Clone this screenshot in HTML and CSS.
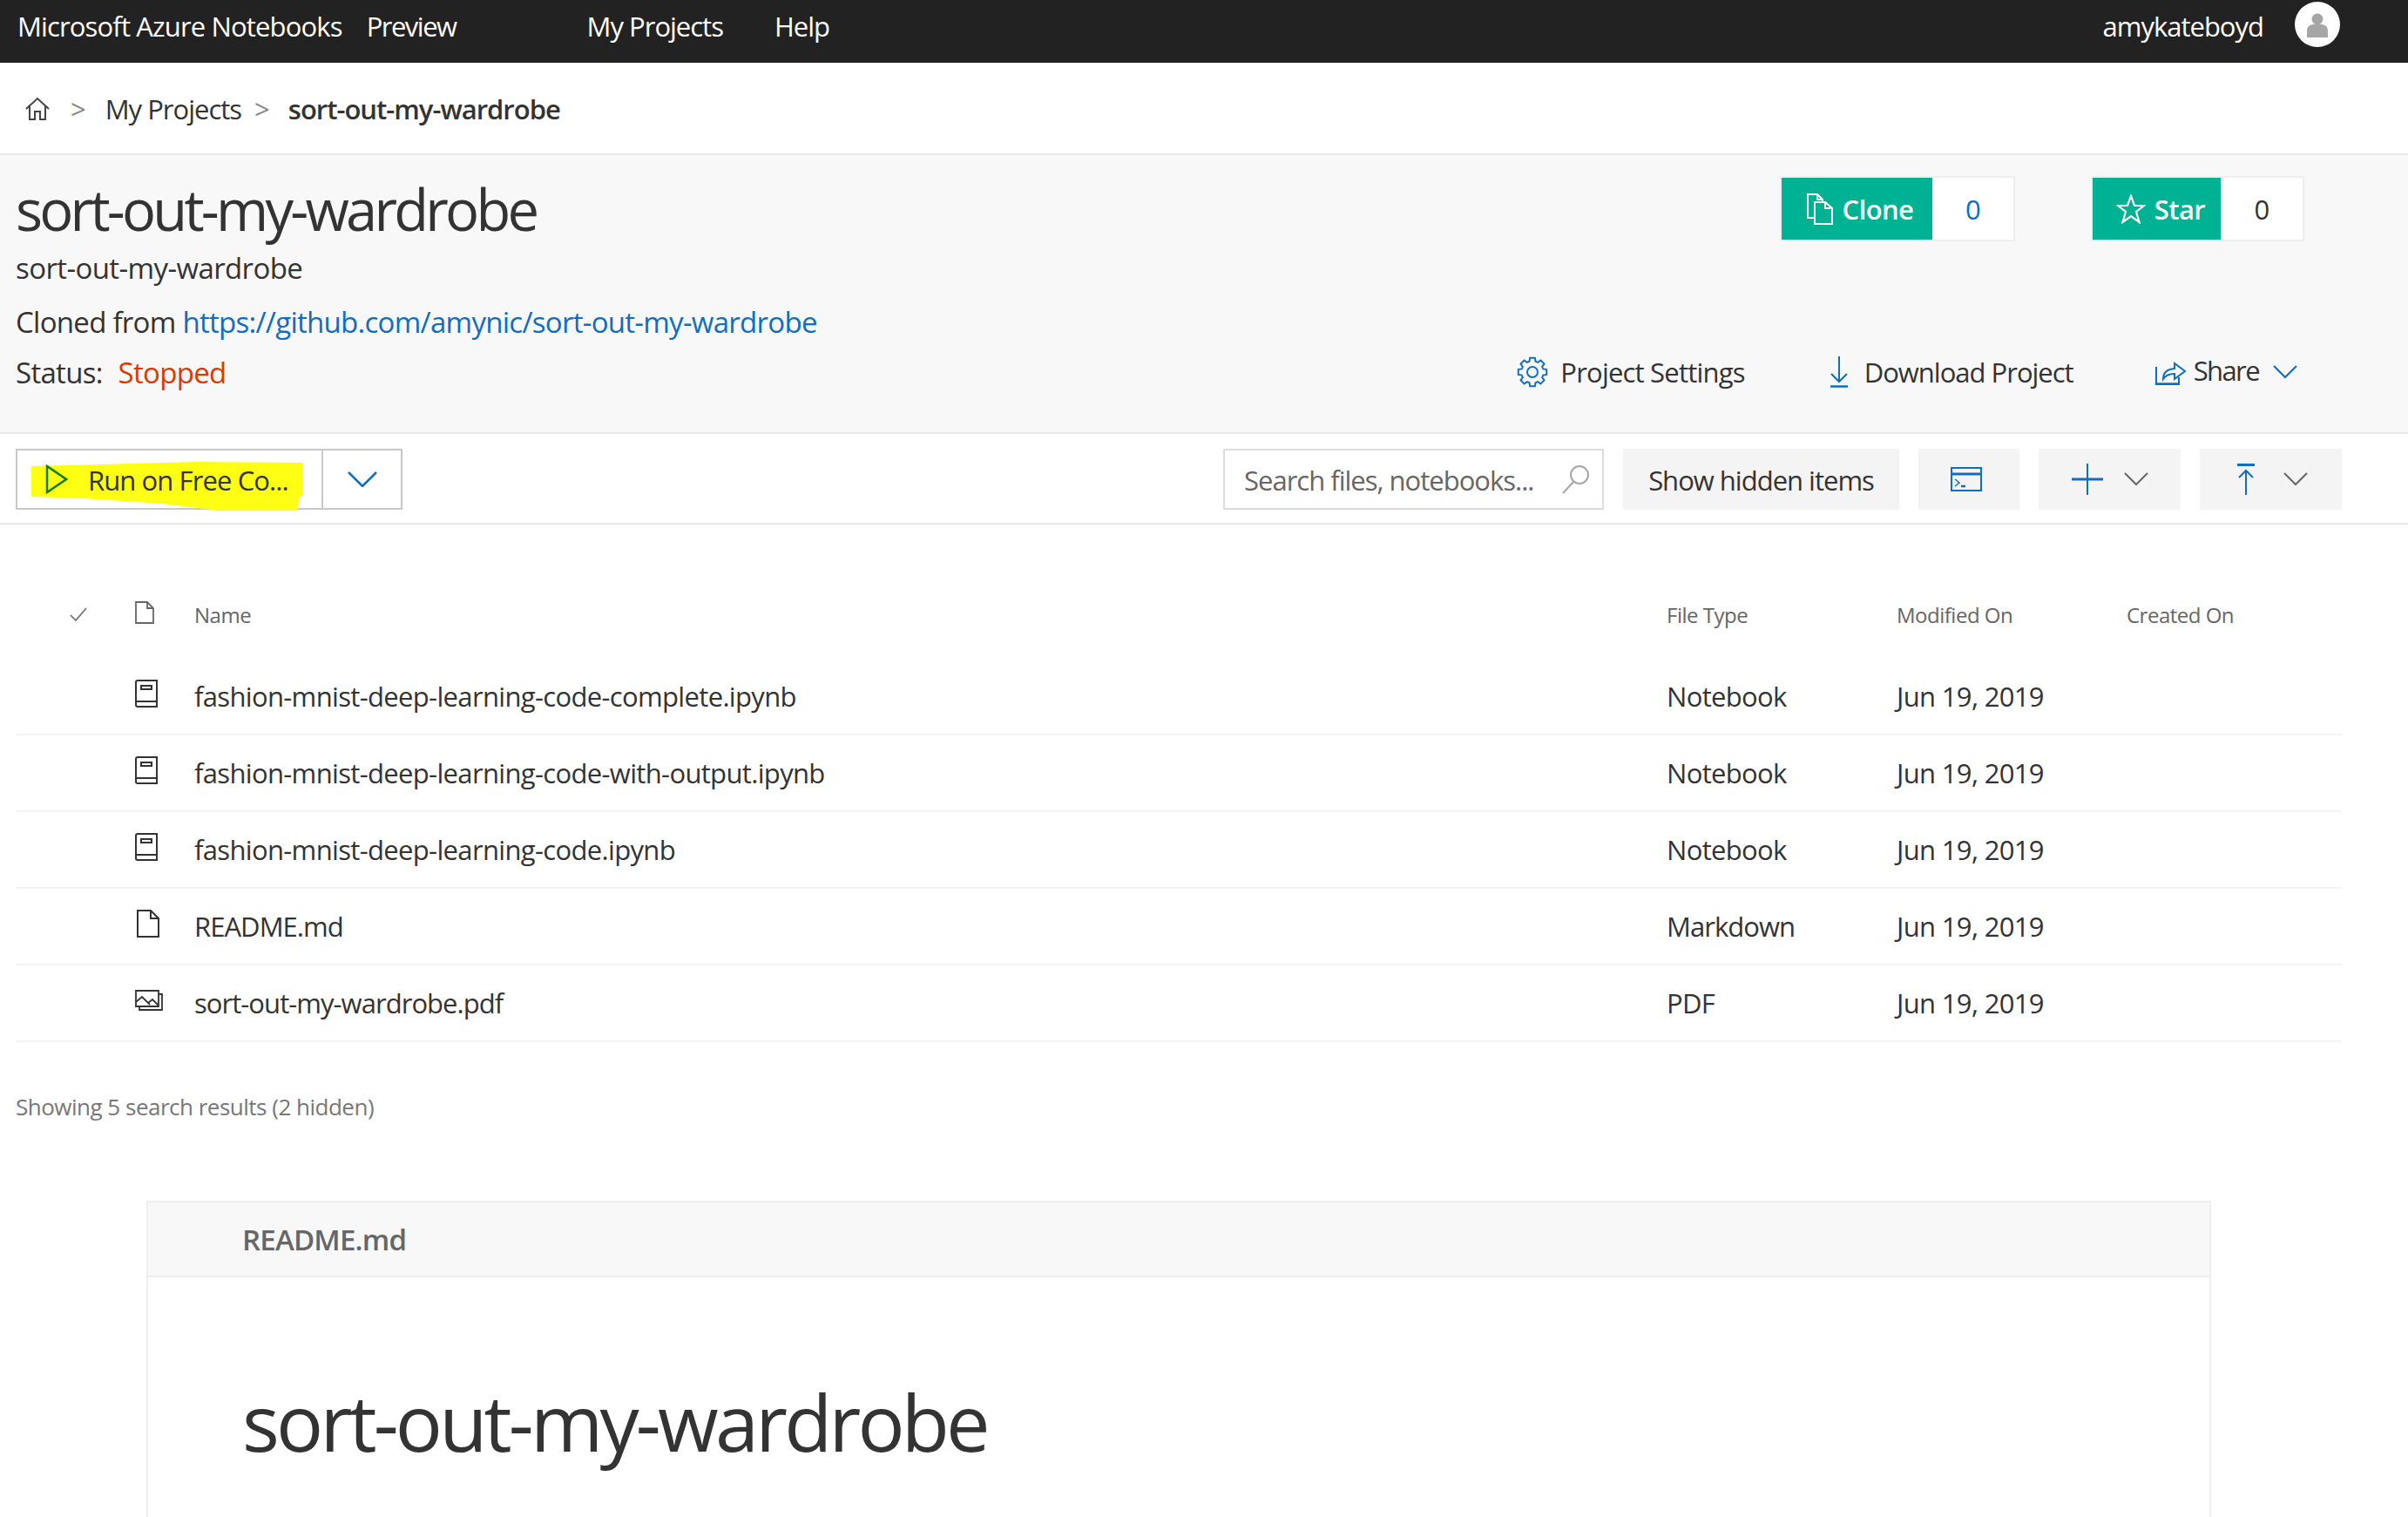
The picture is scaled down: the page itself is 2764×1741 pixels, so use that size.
FILE: index.html
```html
<!DOCTYPE html>
<html lang="en">
<head>
    <meta charset="UTF-8">
    <title>sort-out-my-wardrobe - Microsoft Azure Notebooks</title>
    <link rel="stylesheet" href="styles.css">
</head>
<body>

<nav class="topbar">
    <a class="brand">Microsoft Azure Notebooks</a>
    <a class="preview">Preview</a>
    <a class="nav-projects">My Projects</a>
    <a class="nav-help">Help</a>
    <span class="user">amykateboyd</span>
    <span class="avatar">
        <svg width="26" height="30" viewBox="0 0 26 30"><circle cx="13" cy="8" r="6.5" fill="#a6a6a6"/><path d="M1 29v-8q0-6 7-7h10q7 1 7 7v8z" fill="#a6a6a6"/></svg>
    </span>
</nav>

<div class="breadcrumb">
    <svg class="home" width="28" height="28" viewBox="0 0 28 28" fill="none" stroke="#444" stroke-width="2"><path d="M1 14 14 2l13 12M5 11v15h6v-9h6v9h6V11"/></svg>
    <span class="sep">&gt;</span>
    <a class="crumb">My Projects</a>
    <span class="sep sep2">&gt;</span>
    <strong class="crumb-current">sort-out-my-wardrobe</strong>
</div>

<header class="project">
    <div class="project-info">
        <h1 class="project-title">sort-out-my-wardrobe</h1>
        <div class="project-desc">sort-out-my-wardrobe</div>
        <div class="project-clone">Cloned from <a class="link">https://github.com/amynic/sort-out-my-wardrobe</a></div>
        <div class="project-status">Status: <span class="stopped">Stopped</span></div>
    </div>
    <div class="project-side">
        <div class="counters">
            <div class="counter">
                <span class="counter-btn clone-btn">
                    <svg width="32" height="36" viewBox="0 0 32 36" fill="none" stroke="#fff" stroke-width="2"><path d="M10 28H2V1h11l6 6v3"/><path d="M13 1v6h6M10 10h12l8 7v18H10zM22 10v7h8"/></svg>
                    Clone
                </span>
                <span class="counter-num clone-num">0</span>
            </div>
            <div class="counter star">
                <span class="counter-btn star-btn">
                    <svg width="34" height="34" viewBox="0 0 34 34" fill="none" stroke="#fff" stroke-width="2.2"><path d="M17 2l4 11h11l-9 7 3.500 12L17 25 7.500 32 11 20l-9-7h11z"/></svg>
                    Star
                </span>
                <span class="counter-num star-num">0</span>
            </div>
        </div>
        <div class="actions">
            <a class="action settings">
                <svg width="36" height="36" viewBox="0 0 24 24" fill="none" stroke="#106ebe" stroke-width="1.300"><polygon points="9.66,3.83 10.09,1.17 13.91,1.17 14.34,3.83 16.12,4.57 18.31,2.99 21.01,5.69 19.43,7.88 20.17,9.66 22.83,10.09 22.83,13.91 20.17,14.34 19.43,16.12 21.01,18.31 18.31,21.01 16.12,19.43 14.34,20.17 13.91,22.83 10.09,22.83 9.66,20.17 7.88,19.43 5.69,21.01 2.99,18.31 4.57,16.12 3.83,14.34 1.17,13.91 1.17,10.09 3.83,9.66 4.57,7.88 2.99,5.69 5.69,2.99 7.88,4.57"/><circle cx="12" cy="12" r="4"/></svg>
                Project Settings
            </a>
            <a class="action download">
                <svg width="22" height="36" viewBox="0 0 22 36" fill="none" stroke="#106ebe" stroke-width="2"><path d="M11 0v28M2 20l9 9 9-9"/><path d="M1 34.500h20" stroke-width="2.500"/></svg>
                Download Project
            </a>
            <a class="action share">
                <svg width="36" height="30" viewBox="0 0 36 30" fill="none" stroke="#106ebe" stroke-width="2"><path d="M1 9v20h26v-8" /><path d="M1 28.500h26" stroke-width="2.500"/><path d="M9 23q0-11 13-12V5l12 9-12 9v-6q-9 0-13 6z"/></svg>
                <span class="share-text">Share</span>
                <svg class="chev" width="28" height="16" viewBox="0 0 28 16" fill="none" stroke="#106ebe" stroke-width="2.200"><path d="M1 1l13 13L27 1"/></svg>
            </a>
        </div>
    </div>
</header>

<div class="toolbar">
    <div class="run">
        <!-- marker scribble on top of the button -->
        <svg class="marker" width="312" height="56" viewBox="0 0 312 56"><path d="M0 5 80 3 190 0 311 1 312 38 307 41 306 56 215 56 150 48 60 42 0 40z" fill="#ffff14"/></svg>
        <span class="run-main">
            <svg class="play" width="26" height="34" viewBox="0 0 26 34" fill="none" stroke="#107c10" stroke-width="2.500"><path d="M2 2v30l22-15z"/></svg>
            <span class="run-text">Run on Free Co...</span>
        </span>
        <span class="run-drop">
            <svg width="34" height="18" viewBox="0 0 34 18" fill="none" stroke="#106ebe" stroke-width="2.500"><path d="M1 1l16 16L33 1"/></svg>
        </span>
    </div>
    <div class="tools">
        <div class="search">
            <span class="search-text">Search files, notebooks...</span>
            <svg width="32" height="34" viewBox="0 0 32 34" fill="none" stroke="#a6a6a6" stroke-width="2"><circle cx="20" cy="12" r="10"/><path d="M13 20 1 33"/></svg>
        </div>
        <button class="tool hidden-btn">Show hidden items</button>
        <button class="tool term-btn">
            <svg width="36" height="28" viewBox="0 0 36 28" fill="none" stroke="#106ebe" stroke-width="2"><rect x="1" y="1" width="34" height="26"/><path d="M1 8h34" stroke-width="3"/><path d="M5 14l5 4-5 4" stroke-width="1.500"/><path d="M12 22h5" stroke-width="2.500"/></svg>
        </button>
        <button class="tool add-btn">
            <svg width="36" height="36" viewBox="0 0 36 36" fill="none" stroke="#106ebe" stroke-width="2"><path d="M18 0v36"/><path d="M0 18h36" stroke-width="3"/></svg>
            <svg class="tool-chev" width="28" height="16" viewBox="0 0 28 16" fill="none" stroke="#666" stroke-width="2"><path d="M1 1l13 13L27 1"/></svg>
        </button>
        <button class="tool upload-btn">
            <svg width="22" height="36" viewBox="0 0 22 36" fill="none" stroke="#106ebe" stroke-width="2"><path d="M1 1.500h20" stroke-width="3"/><path d="M11 36V8M3 16l8-8 8 8"/></svg>
            <svg class="tool-chev" width="28" height="16" viewBox="0 0 28 16" fill="none" stroke="#666" stroke-width="2"><path d="M1 1l13 13L27 1"/></svg>
        </button>
    </div>
</div>

<main class="files">
    <div class="file-row file-head">
        <span class="cell-check"><svg width="20" height="16" viewBox="0 0 20 16" fill="none" stroke="#666" stroke-width="1.500"><path d="M1 9l6 6L19 1"/></svg></span>
        <span class="cell-icon">
            <svg width="22" height="26" viewBox="0 0 22 26" fill="none" stroke="#666" stroke-width="1.800"><path d="M1 1h13l7 7v17H1zM14 1v7h7"/></svg>
        </span>
        <span>Name</span>
        <span>File Type</span>
        <span>Modified On</span>
        <span>Created On</span>
    </div>
    <div class="file-row">
        <span class="cell-check"></span>
        <span class="cell-icon"><svg width="26" height="32" viewBox="0 0 26 32" fill="none" stroke="#333" stroke-width="2"><path d="M1 27V3q0-2 2-2h22v30H3q-2 0-2-2zM1 25h24"/><rect x="7" y="7" width="12" height="4"/></svg></span>
        <span>fashion-mnist-deep-learning-code-complete.ipynb</span>
        <span>Notebook</span>
        <span>Jun 19, 2019</span>
        <span></span>
    </div>
    <div class="file-row">
        <span class="cell-check"></span>
        <span class="cell-icon"><svg width="26" height="32" viewBox="0 0 26 32" fill="none" stroke="#333" stroke-width="2"><path d="M1 27V3q0-2 2-2h22v30H3q-2 0-2-2zM1 25h24"/><rect x="7" y="7" width="12" height="4"/></svg></span>
        <span>fashion-mnist-deep-learning-code-with-output.ipynb</span>
        <span>Notebook</span>
        <span>Jun 19, 2019</span>
        <span></span>
    </div>
    <div class="file-row">
        <span class="cell-check"></span>
        <span class="cell-icon"><svg width="26" height="32" viewBox="0 0 26 32" fill="none" stroke="#333" stroke-width="2"><path d="M1 27V3q0-2 2-2h22v30H3q-2 0-2-2zM1 25h24"/><rect x="7" y="7" width="12" height="4"/></svg></span>
        <span>fashion-mnist-deep-learning-code.ipynb</span>
        <span>Notebook</span>
        <span>Jun 19, 2019</span>
        <span></span>
    </div>
    <div class="file-row">
        <span class="cell-check"></span>
        <span class="cell-icon"><svg class="doc-icon" width="26" height="32" viewBox="0 0 26 32" fill="none" stroke="#333" stroke-width="2"><path d="M1 1h15l9 9v21H1zM16 1v9h9"/></svg></span>
        <span class="tight">README.md</span>
        <span class="tight">Markdown</span>
        <span>Jun 19, 2019</span>
        <span></span>
    </div>
    <div class="file-row">
        <span class="cell-check"></span>
        <span class="cell-icon"><svg width="32" height="24" viewBox="0 0 32 24" fill="none" stroke="#333" stroke-width="1.800"><path d="M1 1h26v18H1z"/><path d="M27 5h4v18H5v-4"/><path d="M1 14l7-6 9 9M15 15l5-4 7 7"/></svg></span>
        <span class="tight">sort-out-my-wardrobe.pdf</span>
        <span>PDF</span>
        <span>Jun 19, 2019</span>
        <span></span>
    </div>
    <div class="results">Showing 5 search results (2 hidden)</div>
</main>

<section class="readme">
    <div class="readme-head">README.md</div>
    <div class="readme-body">
        <h1 class="readme-title">sort-out-my-wardrobe</h1>
    </div>
</section>

</body>
</html>
```

FILE: styles.css
```css
html, body {
    margin: 0;
    padding: 0;
}
body {
    height: 1741px;
    overflow: hidden;
    background-color: #fff;
    color: #333;
    font-family: "Open Sans", "Noto Sans", sans-serif;
    font-size: 31px;
    letter-spacing: -0.7px;
}
svg {
    flex-shrink: 0;
    display: block;
}

/* top bar */
.topbar {
    height: 72px;
    box-sizing: border-box;
    background-color: #222;
    color: #fff;
    display: flex;
    align-items: center;
    padding: 0 78px 12px 20px;
    letter-spacing: -1px;
}
.brand {
    letter-spacing: -0.85px;
}
.preview {
    margin-left: 28px;
    letter-spacing: -1.5px;
}
.nav-projects {
    margin-left: 150px;
}
.nav-help {
    margin-left: 59px;
}
.user {
    margin-left: auto;
}
.avatar {
    width: 52px;
    height: 52px;
    margin-left: 36px;
    border-radius: 50%;
    background-color: #fff;
    display: flex;
    align-items: flex-end;
    justify-content: center;
    padding-bottom: 0;
    overflow: hidden;
    align-self: flex-start;
    margin-top: 2px;
}
.avatar svg {
    margin-bottom: 10px;
}

/* breadcrumb */
.breadcrumb {
    height: 106px;
    box-sizing: border-box;
    border-bottom: 2px solid #e8e8e8;
    display: flex;
    align-items: center;
    padding: 2px 0 0 29px;
    letter-spacing: -1px;
}
.sep {
    color: #888;
    margin: 0 23px 0 24px;
}
.sep2 {
    margin: 0 22px 0 15px;
}
.crumb-current {
    font-weight: 600;
}

/* project header */
.project {
    height: 318px;
    box-sizing: border-box;
    background-color: #f8f8f8;
    display: flex;
    justify-content: space-between;
    padding: 0 121px 0 18px;
}
.project-title {
    margin: 20px 0 0;
    font-size: 65px;
    font-weight: 400;
    line-height: 84px;
    letter-spacing: -3.750px;
}
.project-desc {
    margin-top: 4px;
    line-height: 44px;
    font-size: 33px;
    letter-spacing: -0.6px;
}
.project-clone {
    margin-top: 18px;
    line-height: 44px;
    font-size: 33px;
    letter-spacing: -0.72px;
}
.project-status {
    margin-top: 14px;
    line-height: 44px;
    font-size: 33px;
    letter-spacing: -0.7px;
}
.link {
    color: #106ebe;
}
.stopped {
    color: #d83b01;
    margin-left: 10px;
}
.project-side {
    display: flex;
    flex-direction: column;
    align-items: flex-end;
}
.counters {
    display: flex;
    gap: 91px;
    margin-top: 26px;
    letter-spacing: -0.6px;
}
.counter {
    display: flex;
    height: 71px;
    background-color: #fff;
    box-shadow: 0 0 0 2px #eee;
}
.counter-btn {
    background-color: #00b294;
    color: #fff;
    font-weight: 600;
    display: flex;
    align-items: center;
    justify-content: center;
    gap: 10px;
    box-sizing: border-box;
}
.clone-btn {
    width: 173px;
    padding-left: 6px;
}
.star-btn {
    width: 147px;
    padding-left: 9px;
}
.counter-num {
    display: flex;
    align-items: center;
    justify-content: center;
}
.clone-num {
    width: 93px;
    color: #106ebe;
}
.star-num {
    width: 94px;
}
.actions {
    display: flex;
    align-items: center;
    margin-top: 131px;
    padding-right: 6px;
}
.action {
    display: flex;
    align-items: center;
    gap: 14px;
}
.settings {
    letter-spacing: -0.8px;
}
.download {
    margin-left: 97px;
    gap: 18px;
    letter-spacing: -1px;
}
.share {
    margin-left: 94px;
    gap: 8px;
}
.share-text {
    margin-top: -4px;
    letter-spacing: -1.600px;
}
.share .chev {
    margin-left: 8px;
}

/* toolbar */
.toolbar {
    height: 106px;
    box-sizing: border-box;
    border-top: 2px solid #e8e8e8;
    border-bottom: 2px solid #e8e8e8;
    display: flex;
    justify-content: space-between;
    align-items: center;
    padding: 1px 76px 0 18px;
    letter-spacing: -1px;
}
.run {
    position: relative;
    display: flex;
    width: 444px;
    height: 70px;
    box-sizing: border-box;
    border: 2px solid #c8c8c8;
}
.marker {
    position: absolute;
    left: 16px;
    top: 13px;
}
.run-main {
    position: relative;
    width: 351px;
    display: flex;
    align-items: center;
    gap: 23px;
    padding-left: 32px;
    box-sizing: border-box;
    border-right: 2px solid #c8c8c8;
    letter-spacing: -0.9px;
}
.run-text, .search-text {
    margin-top: 2px;
}
.run-drop {
    flex: 1;
    display: flex;
    align-items: center;
    justify-content: center;
}
.tools {
    display: flex;
    gap: 22px;
}
.search {
    width: 437px;
    height: 70px;
    box-sizing: border-box;
    border: 2px solid #ddd;
    display: flex;
    align-items: center;
    justify-content: space-between;
    padding: 0 14px 0 22px;
    color: #666;
}
.tool {
    height: 70px;
    border: none;
    padding: 0;
    background-color: #f4f4f4;
    color: #333;
    font-family: inherit;
    font-size: inherit;
    letter-spacing: inherit;
    display: flex;
    align-items: center;
    justify-content: center;
}
.hidden-btn {
    width: 317px;
    padding-top: 2px;
}
.term-btn {
    width: 116px;
    padding-right: 6px;
}
.add-btn {
    width: 163px;
    gap: 24px;
}
.upload-btn {
    width: 163px;
    gap: 32px;
    padding-left: 2px;
}

/* file list */
.files {
    padding: 0 76px 0 18px;
}
.file-row {
    display: grid;
    grid-template-columns: 137px 68px 1690px 264px 264px 1fr;
    align-items: center;
    height: 88px;
    box-sizing: border-box;
    border-bottom: 2px solid #f4f4f4;
    letter-spacing: -0.66px;
}
.tight {
    letter-spacing: -0.95px;
}
.file-head {
    height: 154px;
    padding-top: 53px;
    border-bottom: none;
    font-size: 24px;
    letter-spacing: -0.5px;
    color: #666;
}
.cell-check {
    padding-left: 62px;
}
.cell-icon {
    margin-bottom: 6px;
}
.file-head .cell-check {
    margin-bottom: 2px;
}
.doc-icon {
    margin-left: 2px;
}
.results {
    margin-top: 56px;
    font-size: 26px;
    letter-spacing: -0.5px;
    color: #777;
}

/* readme */
.readme {
    margin: 90px 226px 0 168px;
    height: 400px;
    border: 2px solid #eee;
    border-bottom: none;
}
.readme-head {
    height: 86px;
    box-sizing: border-box;
    background-color: #f8f8f8;
    border-bottom: 2px solid #eee;
    display: flex;
    align-items: center;
    padding-left: 108px;
    color: #666;
    font-weight: 600;
    font-size: 33px;
    letter-spacing: -0.8px;
}
.readme-title {
    margin: 105px 0 0 108px;
    font-size: 90px;
    font-weight: 400;
    letter-spacing: -3.800px;
    line-height: 120px;
}
```
